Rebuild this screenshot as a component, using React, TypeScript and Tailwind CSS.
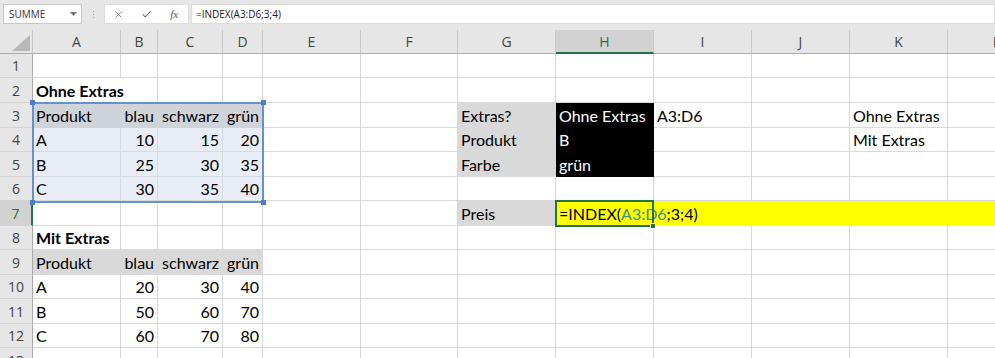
import type { ReactNode } from 'react';
import { X, Check } from 'lucide-react';

type Fill = 'none' | 'selHead' | 'sel' | 'gray' | 'black' | 'yellow';
type Cell = { v?: ReactNode; right?: boolean; bold?: boolean; fill?: Fill; over?: boolean };

const COLS = ['A', 'B', 'C', 'D', 'E', 'F', 'G', 'H', 'I', 'J', 'K', 'L'];
const ROWS = [1, 2, 3, 4, 5, 6, 7, 8, 9, 10, 11, 12, 13];

const fills: Record<Fill, string> = {
  none: 'border-[#d9d9d9]',
  selHead: 'bg-[#cfd3da] border-[#cfd3da]',
  sel: 'bg-[#e9edf6] border-[#d5dae3]',
  gray: 'bg-[#d9d9d9] border-[#d9d9d9]',
  black: 'bg-black border-black text-white',
  yellow: 'bg-[#ffff00] border-[#ffff00]',
};

const cells: Record<string, Cell> = {
  A2: { v: 'Ohne Extras', bold: true, over: true },
  A8: { v: 'Mit Extras', bold: true },
  G3: { v: 'Extras?', fill: 'gray' },
  H3: { v: 'Ohne Extras', fill: 'black' },
  I3: { v: 'A3:D6' },
  K3: { v: 'Ohne Extras' },
  G4: { v: 'Produkt', fill: 'gray' },
  H4: { v: 'B', fill: 'black' },
  K4: { v: 'Mit Extras' },
  G5: { v: 'Farbe', fill: 'gray' },
  H5: { v: 'grün', fill: 'black' },
  G7: { v: 'Preis', fill: 'gray' },
  H7: {
    v: (
      <>
        =INDEX(<span className="text-[#3d9484]">A3:D6</span>;3;4)
      </>
    ),
    fill: 'yellow',
    over: true,
  },
  I7: { fill: 'yellow' },
  J7: { fill: 'yellow' },
  K7: { fill: 'yellow' },
  L7: { fill: 'yellow' },
};

function addTable(row: number, head: Fill, body: Fill, data: number[][]) {
  ['Produkt', 'blau', 'schwarz', 'grün'].forEach((v, i) => {
    cells[COLS[i] + row] = { v, right: i > 0, fill: head };
  });
  ['A', 'B', 'C'].forEach((p, r) => {
    cells['A' + (row + 1 + r)] = { v: p, fill: body };
    data[r].forEach((n, i) => {
      cells[COLS[i + 1] + (row + 1 + r)] = { v: String(n), right: true, fill: body };
    });
  });
}

addTable(3, 'selHead', 'sel', [
  [10, 15, 20],
  [25, 30, 35],
  [30, 35, 40],
]);
addTable(9, 'gray', 'none', [
  [20, 30, 40],
  [50, 60, 70],
  [60, 70, 80],
]);

function FormulaBar() {
  return (
    <div className="h-[30px] bg-[#e6e6e6] flex items-start pt-[4px] font-['Open_Sans',sans-serif] text-[10px] text-[#333]">
      <div className="ml-[3px] w-[79px] h-[20px] bg-white border border-[#c8c8c8] flex items-center justify-between pl-[5px] pr-[4px]">
        <span>SUMME</span>
        <svg width="7" height="4" viewBox="0 0 7 4">
          <path d="M0 0h7L3.5 4z" fill="#777" />
        </svg>
      </div>
      <div className="ml-[10px] w-[3px] h-[20px] flex flex-col items-center justify-center gap-[2px]">
        <span className="w-[1px] h-[1px] bg-[#a8a8a8]" />
        <span className="w-[1px] h-[1px] bg-[#a8a8a8]" />
        <span className="w-[1px] h-[1px] bg-[#a8a8a8]" />
      </div>
      <div className="ml-[9px] w-[85px] h-[20px] bg-white border border-[#dcdcdc] flex items-center text-[#666]">
        <div className="w-[28px] flex justify-center">
          <X className="w-[11px] h-[11px]" strokeWidth={1.6} />
        </div>
        <div className="w-[28px] flex justify-center">
          <Check className="w-[11px] h-[11px]" strokeWidth={2.2} />
        </div>
        <div className="w-[28px] flex justify-center font-['Liberation_Serif',serif] italic text-[11px] text-[#555]">
          fx
        </div>
      </div>
      <div className="ml-[2px] flex-1 h-[20px] bg-white border border-[#dcdcdc] flex items-center pl-[4px] text-[#222]">
        =INDEX(A3:D6;3;4)
      </div>
    </div>
  );
}

export default function App() {
  return (
    <div className="w-[995px] h-[358px] overflow-hidden bg-white">
      <FormulaBar />
      <div className="relative w-[1046px] grid grid-cols-[33px_88px_37px_65px_40px_98px_97px_98px_98px_98px_98px_98px_98px] grid-rows-[24px_24px_25px_25px_24px_25px_24px_25px_24px_25px_24px_25px_24px_25px]">
        {/* column headers */}
        <div className="bg-[#e6e6e6] border-r border-b border-r-[#c8c8c8] border-b-[#ababab]">
          <svg width="32" height="23" viewBox="0 0 32 23">
            <path d="M12 21H30V5z" fill="#b8b8b8" />
          </svg>
        </div>
        {COLS.map((c) => (
          <div
            key={c}
            className={`flex items-center justify-center font-['Open_Sans',sans-serif] text-[14px] border-r border-r-[#c8c8c8] ${
              c === 'H'
                ? 'bg-[#d2d2d2] text-[#217346] border-b-2 border-b-[#217346]'
                : 'bg-[#e6e6e6] text-[#444] border-b border-b-[#ababab]'
            }`}
          >
            {c}
          </div>
        ))}

        {ROWS.map((r) => (
          <div key={r} className="contents">
            <div
              className={`flex items-center justify-center font-['Open_Sans',sans-serif] text-[14px] border-b border-b-[#d4d4d4] ${
                r === 7
                  ? 'bg-[#d2d2d2] text-[#217346] border-r-2 border-r-[#217346]'
                  : 'bg-[#e6e6e6] text-[#444] border-r border-r-[#ababab]'
              }`}
            >
              {r}
            </div>
            {COLS.map((c) => {
              const cell = cells[c + r] ?? {};
              return (
                <div
                  key={c}
                  className={`flex items-end pb-[1px] px-[3px] border-r border-b whitespace-nowrap font-['Lato',sans-serif] text-[16px] leading-[20px] ${
                    fills[cell.fill ?? 'none']
                  } ${cell.right ? 'justify-end' : ''} ${cell.bold ? 'font-bold' : ''} ${
                    cell.over ? 'relative z-10 border-r-transparent' : ''
                  } ${cell.fill === 'black' ? '' : 'text-black'}`}
                >
                  {cell.v}
                </div>
              );
            })}
          </div>
        ))}

        {/* range highlight A3:D6 */}
        <div className="absolute left-[32px] top-[72px] w-[232px] h-[101px] border-2 border-[#6790d0] pointer-events-none z-20">
          <span className="absolute -left-[4px] -top-[4px] w-[5px] h-[5px] bg-[#4f7cc6]" />
          <span className="absolute -right-[4px] -top-[4px] w-[5px] h-[5px] bg-[#4f7cc6]" />
          <span className="absolute -left-[4px] -bottom-[4px] w-[5px] h-[5px] bg-[#4f7cc6]" />
          <span className="absolute -right-[4px] -bottom-[4px] w-[5px] h-[5px] bg-[#4f7cc6]" />
        </div>

        {/* active cell H7 */}
        <div className="absolute left-[555px] top-[170px] w-[99px] h-[27px] border-2 border-[#217346] pointer-events-none z-20">
          <span className="absolute -right-[4px] -bottom-[4px] w-[6px] h-[6px] bg-[#217346] border border-white" />
        </div>
      </div>
    </div>
  );
}
